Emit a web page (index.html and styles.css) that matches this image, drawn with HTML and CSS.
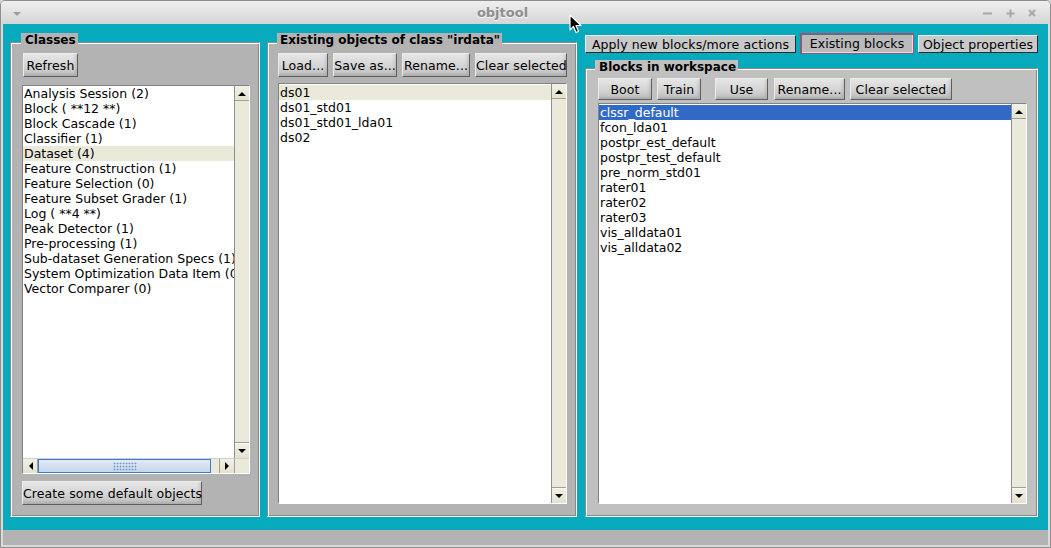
FILE: index.html
```html
<!DOCTYPE html>
<html>
<head>
<meta charset="utf-8">
<title>objtool</title>
<link rel="stylesheet" href="styles.css">
</head>
<body>
<div class="win">
  <div class="titlebar">
    <span class="tri"></span>
    <span class="title">objtool</span>
    <svg class="controls" width="60" height="12" viewBox="0 0 60 12">
      <line x1="3" y1="6.5" x2="12" y2="6.5" stroke="#a8a8a8" stroke-width="2"/>
      <line x1="26.5" y1="6.5" x2="34.5" y2="6.5" stroke="#a8a8a8" stroke-width="2"/>
      <line x1="30.5" y1="2.5" x2="30.5" y2="10.5" stroke="#a8a8a8" stroke-width="2"/>
      <line x1="49" y1="3" x2="55" y2="9" stroke="#a8a8a8" stroke-width="2"/>
      <line x1="55" y1="3" x2="49" y2="9" stroke="#a8a8a8" stroke-width="2"/>
    </svg>
  </div>

  <div class="main">
    <section class="panel p-classes">
      <div class="legend">Classes</div>
      <div class="bar bar-top"><button class="btn btn-tall w-refresh">Refresh</button></div>
      <div class="lb lb-h">
        <ul class="items">
          <li>Analysis Session (2)</li>
          <li>Block ( **12 **)</li>
          <li>Block Cascade (1)</li>
          <li>Classifier (1)</li>
          <li class="hl">Dataset (4)</li>
          <li>Feature Construction (1)</li>
          <li>Feature Selection (0)</li>
          <li>Feature Subset Grader (1)</li>
          <li>Log ( **4 **)</li>
          <li>Peak Detector (1)</li>
          <li>Pre-processing (1)</li>
          <li>Sub-dataset Generation Specs (1)</li>
          <li>System Optimization Data Item (0)</li>
          <li>Vector Comparer (0)</li>
        </ul>
        <div class="vs">
          <div class="arr arr-up"><span class="t-up"></span></div>
          <div class="arr arr-down"><span class="t-down"></span></div>
        </div>
        <div class="hs">
          <div class="harr harr-l"><span class="t-left"></span></div>
          <div class="slider"><span class="grip"></span></div>
          <div class="htrough"></div>
          <div class="harr harr-r"><span class="t-right"></span></div>
        </div>
        <div class="corner"></div>
      </div>
      <div class="bar bar-bottom"><button class="btn btn-tall w-create">Create some default objects</button></div>
    </section>

    <section class="panel p-objects">
      <div class="legend">Existing objects of class "irdata"</div>
      <div class="bar bar-top bar-spread">
        <button class="btn btn-tall w-load">Load...</button>
        <button class="btn btn-tall w-save">Save as...</button>
        <button class="btn btn-tall w-ren">Rename...</button>
        <button class="btn btn-tall w-clear">Clear selected</button>
      </div>
      <div class="lb lb-obj">
        <ul class="items">
          <li class="hl">ds01</li>
          <li>ds01_std01</li>
          <li>ds01_std01_lda01</li>
          <li>ds02</li>
        </ul>
        <div class="vs">
          <div class="arr arr-up"><span class="t-up"></span></div>
          <div class="arr arr-down"><span class="t-down"></span></div>
        </div>
      </div>
    </section>

    <div class="rightcol">
      <div class="tabs">
        <button class="tab tab-apply">Apply new blocks/more actions</button>
        <button class="tab tab-active">Existing blocks</button>
        <button class="tab tab-props">Object properties</button>
      </div>
      <section class="panel p-blocks">
        <div class="legend">Blocks in workspace</div>
        <div class="bar bar-blocks">
          <button class="btn btn-short w-boot">Boot</button>
          <button class="btn btn-short w-train">Train</button>
          <button class="btn btn-short w-use">Use</button>
          <button class="btn btn-short w-bren">Rename...</button>
          <button class="btn btn-short w-bclear">Clear selected</button>
        </div>
        <div class="lb lb-blocks">
          <ul class="items">
            <li class="sel">clssr_default</li>
            <li>fcon_lda01</li>
            <li>postpr_est_default</li>
            <li>postpr_test_default</li>
            <li>pre_norm_std01</li>
            <li>rater01</li>
            <li>rater02</li>
            <li>rater03</li>
            <li>vis_alldata01</li>
            <li>vis_alldata02</li>
          </ul>
          <div class="vs">
            <div class="arr arr-up"><span class="t-up"></span></div>
            <div class="arr arr-down"><span class="t-down"></span></div>
          </div>
        </div>
      </section>
    </div>
  </div>

  <div class="status"></div>

  <svg class="cursor" width="14" height="21" viewBox="0 0 14 21">
    <path d="M1 1 L1 16 L4.5 12.5 L7 18.5 L9.5 17.5 L7 11.5 L12 11.5 Z" fill="#000" stroke="#fff" stroke-width="1.2" stroke-linejoin="round"/>
  </svg>
</div>
</body>
</html>
```

FILE: styles.css
```css
* { box-sizing: border-box; margin: 0; padding: 0; }
html, body { width: 1051px; height: 548px; overflow: hidden; }
body {
  background: #d9d9d9;
  font-family: "DejaVu Sans", "Noto Sans", sans-serif;
  font-size: 12.5px;
  color: #000;
}

.win {
  position: relative;
  width: 1051px;
  height: 548px;
  border: 1px solid #8e8e8e;
  border-radius: 5px 5px 0 0;
  background: #dadada;
  padding: 0 2px 2px;
  display: flex;
  flex-direction: column;
}

/* title bar */
.titlebar {
  height: 23px;
  margin: 0 -2px;
  display: flex;
  align-items: center;
  background: linear-gradient(#efefef, #d5d5d5);
  border-radius: 4px 4px 0 0;
}
.tri {
  margin-left: 12px;
  margin-top: 2px;
  width: 0;
  height: 0;
  border-left: 4px solid transparent;
  border-right: 4px solid transparent;
  border-top: 4px solid #9c9c9c;
}
.title {
  flex: 1;
  text-align: center;
  padding-left: 4px;
  font-weight: bold;
  font-size: 13px;
  color: #8e8e8e;
  text-shadow: 0 1px 0 #fafafa;
}
.controls { margin-right: 10px; }

/* main teal area */
.main {
  flex: 1;
  display: flex;
  background: #06aabc;
  padding: 9px 10px 13px 7px;
  min-height: 0;
}

.panel {
  display: flex;
  flex-direction: column;
  background: #b3b3b3;
  border: 1px solid;
  border-color: #8a8a8a #ffffff #ffffff #8a8a8a;
  box-shadow: inset 1px 1px 0 #ffffff, inset -1px -1px 0 #8a8a8a;
  margin-top: 9px;
  min-height: 0;
}
.legend {
  align-self: flex-start;
  background: inherit;
  font-weight: bold;
  font-size: 12px;
  line-height: 14px;
  padding: 0 2px 0 4px;
  margin: -10px 0 0 -1px;
}

.p-classes { width: 250px; padding: 0 9px 11px 11px; }
.p-objects { width: 310px; margin-left: 7px; padding: 0 9px 12px 10px; }
.p-objects .legend { padding-left: 3px; }

.rightcol {
  flex: 1;
  margin-left: 8px;
  display: flex;
  flex-direction: column;
  min-height: 0;
}
.p-blocks {
  flex: 1;
  background: #c0c0c0;
  margin-top: 14px;
  padding: 0 10px 12px 12px;
}
.p-blocks .legend { margin: -9px 0 0 -3px; }

/* buttons */
.bar { display: flex; }
.bar-top { margin-top: 6px; }
.bar-bottom { margin-top: 7px; }
.bar-spread { justify-content: space-between; }
.bar-blocks { margin-top: 4px; }

.btn {
  font-family: inherit;
  font-size: 12.5px;
  letter-spacing: 0.1px;
  color: #000;
  border: 1px solid;
  border-color: #ececec #5e5e5e #5e5e5e #ececec;
  background: linear-gradient(to bottom, #e6e6e6 0%, #d4d4d4 55%, #bebebe 100%);
  box-shadow: inset -2px -2px 3px rgba(0,0,0,0.10);
  padding: 0;
  white-space: nowrap;
  text-align: center;
  overflow: visible;
}
.btn-tall { height: 24px; }
.btn-short { height: 22px; }

.w-refresh { width: 55px; margin-left: 1px; }
.w-create { width: 180px; }

.w-load { width: 50px; }
.w-save { width: 64px; }
.w-ren { width: 68px; }
.w-clear { width: 92px; }

.w-boot { width: 54px; }
.w-train { width: 44px; margin-left: 5px; }
.w-use { width: 53px; margin-left: 14px; }
.w-bren { width: 71px; margin-left: 6px; }
.w-bclear { width: 102px; margin-left: 5px; }

/* tab selector buttons */
.tabs {
  display: flex;
  align-items: flex-end;
  gap: 4px;
  height: 21px;
}
.tab {
  font-family: inherit;
  font-size: 12.5px;
  letter-spacing: 0.1px;
  color: #000;
  height: 18px;
  margin-bottom: 1px;
  padding: 0;
  background: #c9c9c9;
  border: 1px solid;
  border-color: #ececec #2c2c2c #2c2c2c #ececec;
  white-space: nowrap;
  line-height: 15px;
}
.tab-apply { width: 211px; }
.tab-props { width: 120px; }
.tab-active {
  width: 114px;
  height: 21px;
  margin-bottom: 0;
  border: 1px solid #9c4f7e;
  background: #bababa;
  box-shadow: inset 1px 1px 0 #6c6c6c, inset -1px -1px 0 #dedede;
}

/* listboxes */
.lb {
  flex: 1;
  min-height: 0;
  display: grid;
  grid-template-columns: 1fr 15px;
  grid-template-rows: 1fr;
  border: 1px solid;
  border-color: #838383 #ffffff #ffffff #838383;
  background: #fff;
}
.lb-h { margin-top: 8px; grid-template-rows: 1fr 15px; }
.lb-obj { margin-top: 6px; }
.lb-blocks { margin-top: 3px; }

.items {
  list-style: none;
  overflow: hidden;
  padding-top: 1px;
  min-width: 0;
}
.lb-h .items { padding-top: 0; }
.items li {
  height: 15px;
  line-height: 15px;
  padding-left: 1px;
  white-space: nowrap;
  overflow: hidden;
}
.items li.hl { background: #ebe9d9; }
.items li.sel { background: #3169c6; color: #fff; }

.vs {
  border-left: 1px solid #8e8e8e;
  background: #ebe9da;
  display: flex;
  flex-direction: column;
  justify-content: space-between;
}
.arr, .harr {
  height: 15px;
  background: linear-gradient(#f3f1e6, #e4e1cf);
  display: flex;
  align-items: center;
  justify-content: center;
}
.arr-up { box-shadow: inset 0 -1px 0 #a19f90; }
.arr-down { box-shadow: inset 0 1px 0 #fafafa, 0 -1px 0 #a19f90; }
.t-up {
  width: 0; height: 0;
  border-left: 4px solid transparent;
  border-right: 4px solid transparent;
  border-bottom: 4px solid #000;
}
.t-down {
  width: 0; height: 0;
  border-left: 4px solid transparent;
  border-right: 4px solid transparent;
  border-top: 4px solid #000;
}

.hs {
  display: flex;
  background: #ebe9da;
  border-top: 1px solid #cfcfcf;
}
.harr { width: 15px; height: 14px; }
.harr-l { box-shadow: inset -1px 0 0 #a19f90; }
.harr-r { box-shadow: inset 1px 0 0 #a19f90; }
.t-left {
  width: 0; height: 0;
  border-top: 4px solid transparent;
  border-bottom: 4px solid transparent;
  border-right: 4px solid #000;
}
.t-right {
  width: 0; height: 0;
  border-top: 4px solid transparent;
  border-bottom: 4px solid transparent;
  border-left: 4px solid #000;
}
.slider {
  width: 173px;
  border: 1px solid #3a78d6;
  background: linear-gradient(#e3eaf4, #c6d6ec);
  display: flex;
  align-items: center;
  justify-content: center;
}
.grip {
  width: 24px;
  height: 9px;
  background-image: radial-gradient(circle, #6b94d2 0.8px, transparent 1.1px);
  background-size: 3px 3px;
}
.htrough { flex: 1; }
.corner {
  background: #ebe9da;
  border-left: 1px solid #a19f90;
  border-top: 1px solid #cfcfcf;
}

.status {
  height: 15px;
  background: #b3b3b3;
}

.cursor {
  position: absolute;
  left: 568px;
  top: 13px;
}
```
